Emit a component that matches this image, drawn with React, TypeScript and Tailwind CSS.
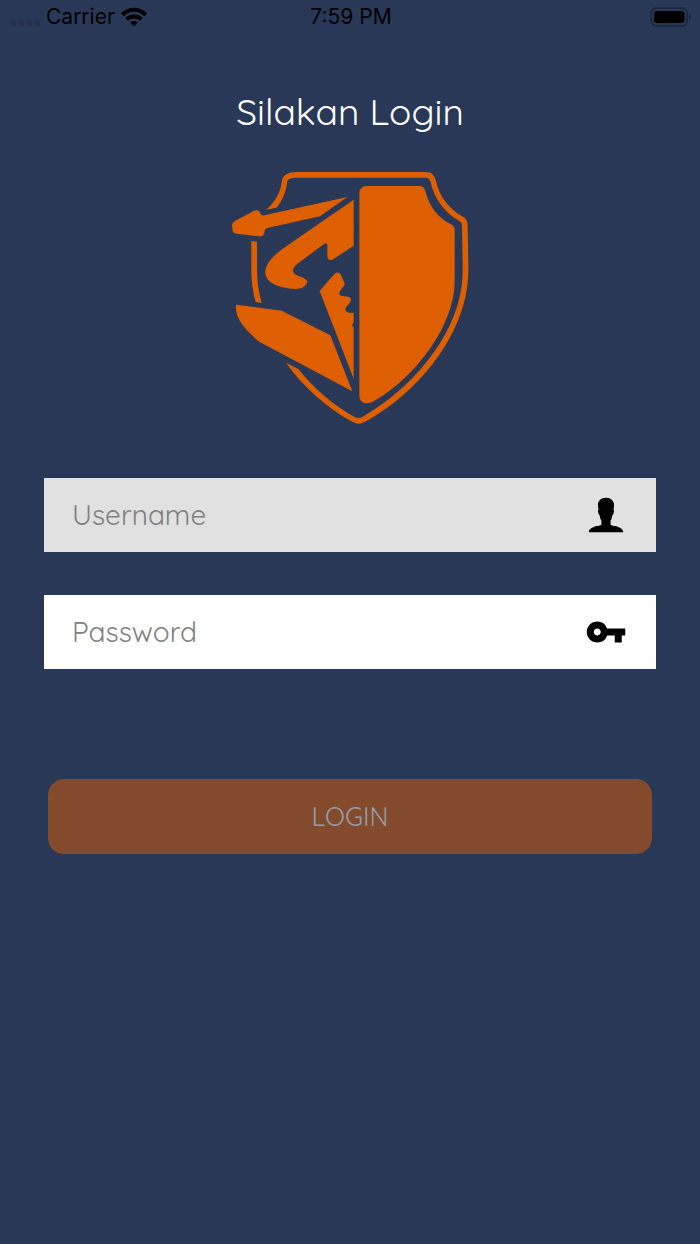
import { useState } from 'react';
import type { FormEvent, InputHTMLAttributes, ReactNode } from 'react';
import { IoIosPerson } from 'react-icons/io';
import { MdVpnKey } from 'react-icons/md';

const StatusBar = () => (
  <header className="grid h-[34px] grid-cols-3 items-center pr-2 pl-2.5 font-['Inter',sans-serif] text-[21px] leading-6 text-black">
    <div className="flex items-center">
      <svg viewBox="0 0 30 20" className="mr-1.5 h-5 w-[30px]" aria-hidden="true">
        <g fill="#232f4b">
          <rect x="0" y="13" width="6" height="6" rx="2" />
          <rect x="8" y="13" width="6" height="6" rx="2" />
          <rect x="16" y="13" width="6" height="6" rx="2" />
          <rect x="24" y="13" width="6" height="6" rx="2" />
        </g>
      </svg>
      <span>Carrier</span>
      <svg viewBox="0 0 26 20" className="ml-1.5 h-5 w-[26px]" aria-hidden="true">
        <g fill="none" stroke="#000" strokeWidth="4">
          <path d="M1.4 7.8C8 1.2 18 1.2 24.6 7.8" />
          <path d="M5.6 12.3C10 8.4 16 8.4 20.4 12.3" />
        </g>
        <path d="M9.2 15.5C11.5 13.6 14.5 13.6 16.8 15.5L13 19.3Z" />
      </svg>
    </div>
    <span className="text-center">7:59 PM</span>
    <svg viewBox="0 0 42 20" className="ml-auto h-5 w-[42px]" aria-hidden="true">
      <rect x="1.2" y="1.2" width="36" height="17.6" rx="5" fill="none" stroke="#1c263d" strokeWidth="1.8" />
      <rect x="4" y="4" width="30.5" height="12" rx="3" />
      <path d="M39 7c3 1 3 5 0 6z" fill="#1c263d" />
    </svg>
  </header>
);

const Logo = () => (
  <svg viewBox="0 0 780 810" className="h-[270px] w-[260px]" fill="#de5f00" role="img" aria-label="Logo">
    {/* shield outline */}
    <path d="M138 149C164 130 183 93 185 66C187 46 202 36 232 36H617C636 36 644 46 648 64C658 108 687 148 724 167C738 174 742 182 743 195L745 320Q745 360 741 385C718 542 590 702 434 786Q416 796 398 786C321 744 247 678 198 608L236 628C280 685 340 735 405 772Q416 777 427 771C575 686 700 538 724 385Q728 360 728 320L726 195Q726 187 717 182C675 160 641 113 632 67Q629 53 617 53H232C209 53 201 57 201 70C198 97 186 125 169 143Z" />
    <path d="M94 243L111 245V330C111 365 116 397 125 429L107 426C98 393 94 363 94 330Z" />
    {/* solid right half */}
    <path d="M441 78H597C609 78 615 86 618 99C627 137 654 174 693 193Q704 199 704 210V365C704 492 590 652 457 726C439 736 418 727 418 707V102Q418 78 441 78Z" />
    {/* left half */}
    <path d="M382 111L300 169L145 203C134 206 134 211 133 218C131 226 126 230 117 229L49 221C41 220 39 217 38 210L36 197C36 190 39 187 45 183L101 153C110 148 120 151 122 161Q125 167 133 166Z" />
    <path d="M401 119V257L341 297C331 303 322 299 322 288V255Q321 246 312 252L235 309C211 328 216 341 236 348C255 354 268 362 259 373C246 390 224 389 199 384C155 376 135 359 136 334C138 312 155 291 187 267Z" />
    <path d="M299 393L341 344C349 335 359 336 363 345L373 367C376 375 372 378 367 384C352 402 357 408 374 409C393 410 397 418 389 429L379 440C372 450 380 458 392 458L401 459V488Q392 494 401 502V656Z" />
    <path d="M48 434L185 452L331 526L397 694L119 546C76 511 43 473 48 434Z" />
  </svg>
);

interface FieldProps extends InputHTMLAttributes<HTMLInputElement> {
  label: string;
  icon: ReactNode;
}

const Field = ({ label, icon, ...rest }: FieldProps) => (
  <label className="flex h-[74px] items-center bg-white pr-7 pl-7 has-[[name=username]]:bg-[#e1e1e1]">
    <input
      {...rest}
      aria-label={label}
      placeholder={label}
      className="h-full min-w-0 flex-1 bg-transparent pb-0.5 text-[28px] leading-10 font-normal text-black outline-none placeholder:text-[#808080]"
    />
    <span className="flex w-11 justify-center text-black">{icon}</span>
  </label>
);

export default function App() {
  const [username, setUsername] = useState('');
  const [password, setPassword] = useState('');

  const handleSubmit = (e: FormEvent) => {
    e.preventDefault();
  };

  return (
    <div className="min-h-screen bg-[#2a3858] font-['Quicksand','Lato',sans-serif]">
      <StatusBar />
      <main className="flex flex-col items-center px-11 pt-[53px]">
        <h1 className="text-[37px] leading-12 font-normal text-white">Silakan Login</h1>
        <div className="mt-[25px]">
          <Logo />
        </div>
        <form onSubmit={handleSubmit} className="mt-12 flex w-full flex-col">
          <Field
            label="Username"
            name="username"
            type="text"
            value={username}
            onChange={(e) => setUsername(e.target.value)}
            icon={<IoIosPerson className="size-[46px] shrink-0" />}
          />
          <div className="mt-[43px]">
            <Field
              label="Password"
              name="password"
              type="password"
              value={password}
              onChange={(e) => setPassword(e.target.value)}
              icon={<MdVpnKey className="size-[42px]" />}
            />
          </div>
          <button
            type="submit"
            disabled={!username || !password}
            className="mx-1 mt-[110px] h-[75px] rounded-2xl bg-[#de5f00] text-[26px] font-normal text-white disabled:bg-[#834b2c] disabled:text-[#959ba9]"
          >
            LOGIN
          </button>
        </form>
      </main>
    </div>
  );
}
